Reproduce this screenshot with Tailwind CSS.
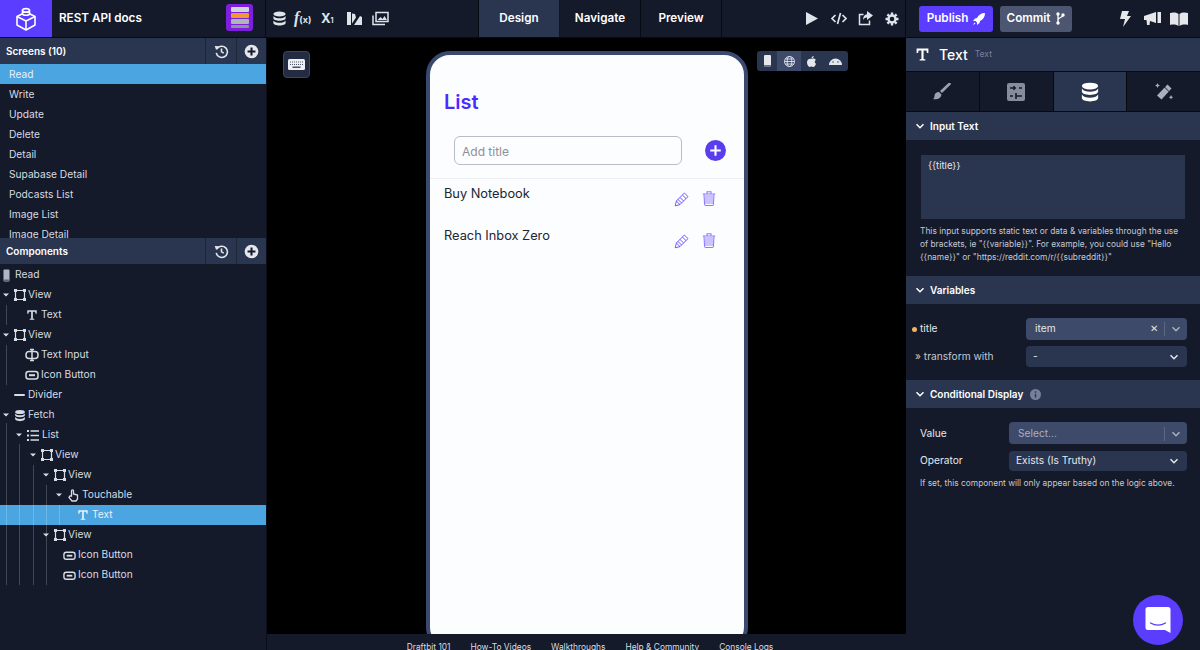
<!DOCTYPE html>
<html lang="en">
<head>
<meta charset="UTF-8" />
<meta name="viewport" content="width=device-width, initial-scale=1.0" />
<title>REST API docs</title>
<script src="https://cdn.jsdelivr.net/npm/@tailwindcss/browser@4"></script>
</head>
<body class="w-[1200px] h-[650px] overflow-hidden relative bg-[#141a2a] text-[#e5e7eb] font-['Inter','Liberation_Sans',sans-serif] text-[10.2px]">

<!-- shared icons -->
<svg class="hidden">
  <symbol id="db" viewBox="0 0 16 16"><ellipse cx="8" cy="3.2" rx="6.5" ry="2.7" fill="currentColor"/><path fill="currentColor" d="M1.5 5.2c1 1.8 3.6 2.5 6.5 2.5s5.500-.7 6.500-2.500v2.400c0 1.500-2.900 2.700-6.500 2.700s-6.500-1.200-6.500-2.700zM1.500 10c1 1.800 3.600 2.500 6.500 2.500s5.500-.7 6.500-2.500v2.800c0 1.500-2.900 2.700-6.500 2.700s-6.500-1.200-6.500-2.700z"/></symbol>
  <symbol id="history" viewBox="0 0 16 16"><path fill="none" stroke="currentColor" stroke-width="1.700" d="M3 5.500a6 6 0 1 1-.6 4M8 4.700v3.600l2.400 1.400"/><path fill="currentColor" d="M.8 2.200l4.800.3-3.400 4z"/></symbol>
  <symbol id="plus" viewBox="0 0 16 16"><circle cx="8" cy="8" r="7.300" fill="currentColor"/><path stroke="#141a2a" stroke-width="2.200" d="M8 3.800v8.400M3.800 8h8.400"/></symbol>
  <symbol id="view" viewBox="0 0 14 14"><path fill="none" stroke="currentColor" stroke-width="1.200" d="M2.500 2.500h9v9h-9z"/><path fill="currentColor" d="M1 1h3v3H1zM10 1h3v3h-3zM1 10h3v3H1zM10 10h3v3h-3z"/></symbol>
  <symbol id="t" viewBox="0 0 14 14"><path fill="currentColor" d="M1.500 1.500h11v4h-1.300l-.6-2.300H8v7.900l1.700.5v1H4.300v-1l1.700-.5V3.200H3.400l-.6 2.300H1.500z"/></symbol>
  <symbol id="input" viewBox="0 0 14 14"><rect x="1" y="3.500" width="12" height="7" rx="3" fill="none" stroke="currentColor" stroke-width="1.500"/><path stroke="currentColor" stroke-width="1.500" d="M7 1.500v11M5 1.500h4M5 12.500h4"/></symbol>
  <symbol id="btn" viewBox="0 0 14 14"><rect x="1" y="3.500" width="12" height="7.500" rx="2.500" fill="none" stroke="currentColor" stroke-width="1.500"/><path stroke="currentColor" stroke-width="2" d="M4 7.200h6"/></symbol>
  <symbol id="caret" viewBox="0 0 6 6"><path fill="currentColor" d="M0 1.500h6L3 4.500z"/></symbol>
  <symbol id="chev" viewBox="0 0 10 10"><path fill="none" stroke="currentColor" stroke-width="1.500" d="M1.500 3.200L5 6.700l3.500-3.500"/></symbol>
  <symbol id="pencil" viewBox="0 0 16 16"><path fill="none" stroke="currentColor" stroke-width=".9" d="M1.200 14.800l1.200-4.800 8-8 3.600 3.600-8 8zM2.400 10l3.600 3.600M4 8.400L7.600 12M6 6.400L9.600 10M8.400 4L12 7.600"/></symbol>
  <symbol id="trash" viewBox="0 0 14 16"><path fill="currentColor" fill-opacity=".45" d="M3 4.500h8v9H3z"/><path fill="none" stroke="currentColor" stroke-width="1.100" d="M2 3.500h10l-.6 10.500a1.200 1.200 0 0 1-1.200 1H3.800a1.200 1.200 0 0 1-1.200-1zM.8 3.500h12.400M5 3.300V1.200h4v2.100"/></symbol>
</svg>

<!-- top bar -->
<header class="flex h-[38px] border-b border-black/60 bg-[#151a2b]">
  <div class="w-[52px] bg-[#5a3dff] flex items-center justify-center">
    <svg class="w-[24px] h-[24px] text-white" viewBox="0 0 24 24" fill="none" stroke="currentColor" stroke-width="1.600" stroke-linejoin="round"><path d="M12 5l9 4.500v8.500l-9 5-9-5V9.500z"/><path d="M3 9.500l9 4.500 9-4.500M12 14v9"/><path d="M8.500 3.500c0 1 1.500 1.800 3.500 1.800s3.500-.8 3.500-1.800v3c0 1-1.500 1.800-3.500 1.800s-3.500-.8-3.500-1.800z" fill="#5a3dff"/><ellipse cx="12" cy="3.300" rx="3.500" ry="1.700" fill="#5a3dff"/></svg>
  </div>
  <div class="w-[174px] pl-[7px] flex items-center text-[11.700px] font-semibold text-white">REST API docs</div>
  <div class="w-[27px] h-[27px] mt-[4px] rounded-[3px] bg-[#7d1fdc] flex flex-col items-center justify-center gap-[1px]">
    <span class="block w-[18px] h-[5px] bg-[#cfd4da] rounded-[1px]"></span>
    <span class="block w-[18px] h-[5px] bg-[#ef9a2f] rounded-[1px]"></span>
    <span class="block w-[18px] h-[5px] bg-[#aeb5bd] rounded-[1px]"></span>
    <span class="block w-[18px] h-[3px] bg-[#8b94a0] rounded-[1px]"></span>
  </div>
  <div class="w-[13px] border-r border-black/60"></div>
  <div class="flex items-center w-[213px] pl-[6px] border-r border-black/60 text-[#dfe3ea]">
    <svg class="w-[15px] h-[15px]"><use href="#db"/></svg>
    <span class="ml-[7px] w-[20px] text-[16px] leading-[16px] font-bold font-['Liberation_Serif',serif] whitespace-nowrap"><i>f</i><span class="text-[9px] font-['Inter',sans-serif]">(x)</span></span>
    <span class="ml-[7px] w-[17px] text-[13px] font-bold">X<span class="text-[7px]">1</span></span>
    <svg class="ml-[8px] w-[16px] h-[15px]" viewBox="0 0 16 15"><path fill="currentColor" d="M1 1h4v13H1zM6 2.500l3 .5 1 3.500-4 6zM8 14l6-9 2 1v8z"/></svg>
    <svg class="ml-[10px] w-[17px] h-[15px]" viewBox="0 0 17 15"><path fill="none" stroke="currentColor" stroke-width="1.500" d="M4 1.500h12v9H4zM1 4.500v9h12"/><path fill="currentColor" d="M5.500 9l3-3 2 2 2-3 2.500 4z"/></svg>
  </div>
  <div class="w-[81px] bg-[#2a3550] flex items-center justify-center text-[11.700px] font-semibold text-white border-r border-black/60">Design</div>
  <div class="w-[81px] flex items-center justify-center text-[11.700px] font-semibold text-white border-r border-black/60">Navigate</div>
  <div class="w-[81px] flex items-center justify-center text-[11.700px] font-semibold text-white border-r border-black/60">Preview</div>
  <div class="w-[184px] flex items-center pl-[83px] gap-[12px] border-r border-black/60 text-[#dfe3ea]">
    <svg class="w-[14px] h-[15px]" viewBox="0 0 14 15"><path fill="currentColor" d="M1 1l12 6.500L1 14z"/></svg>
    <svg class="w-[16px] h-[13px]" viewBox="0 0 16 13"><path fill="none" stroke="currentColor" stroke-width="1.700" d="M4.500 3L1 6.500 4.500 10M11.500 3L15 6.500 11.500 10M9.500 1l-3 11"/></svg>
    <svg class="w-[15px] h-[15px] ml-[-1px]" viewBox="0 0 15 15"><path fill="none" stroke="currentColor" stroke-width="1.500" d="M11.500 9.500v4h-10V3.500h4"/><path fill="currentColor" d="M9 0l6 4.500L9 9V6.500c-2 0-3.500.8-4 3 0-4 1.500-6 4-6.200z"/></svg>
    <svg class="w-[14px] h-[14px]" viewBox="0 0 14 14"><circle cx="7" cy="7" r="3.500" fill="none" stroke="currentColor" stroke-width="2.400"/><path stroke="currentColor" stroke-width="2.400" d="M7 .5v2.500M7 11v2.500M.5 7H3M11 7h2.500M2.400 2.400l1.800 1.800M9.800 9.800l1.800 1.800M2.400 11.600l1.800-1.800M9.800 4.200l1.800-1.800"/></svg>
  </div>
  <div class="flex-1 flex items-center pl-[13px]">
    <div class="w-[74px] h-[26px] rounded-[3px] bg-[#5a3dff] flex items-center justify-center gap-[5px] text-[11.700px] font-semibold text-white">Publish
      <svg class="w-[12px] h-[12px]" viewBox="0 0 12 12"><path fill="currentColor" d="M12 0c-4 0-6.500 2-8 5L2 5.500 0 8h2.500L4 9.500V12l2.500-2L7 8c3-1.500 5-4 5-8zM1.500 9.500L0 12l2.500-1.500z"/></svg>
    </div>
    <div class="ml-[7px] w-[72px] h-[26px] rounded-[3px] bg-[#4d5670] flex items-center justify-center gap-[6px] text-[11.700px] font-semibold text-white">Commit
      <svg class="w-[9px] h-[13px]" viewBox="0 0 9 13"><circle cx="2" cy="2" r="1.700" fill="currentColor"/><circle cx="2" cy="11" r="1.700" fill="currentColor"/><circle cx="7" cy="3" r="1.700" fill="currentColor"/><path fill="none" stroke="currentColor" stroke-width="1.300" d="M2 2v9M7 3c0 3-5 2-5 5"/></svg>
    </div>
    <svg class="ml-[48px] w-[11px] h-[16px]" viewBox="0 0 11 16"><path fill="#e5e7eb" d="M2 0h7L7 5h4L3 16l2-8H0z"/></svg>
    <svg class="ml-[13px] w-[17px] h-[14px]" viewBox="0 0 17 14"><path fill="#e5e7eb" d="M0 4l12-4v11L6 9l-.5 4H3l-.5-5H0zM13.500 0H17v11h-3.500z"/></svg>
    <svg class="ml-[9px] w-[18px] h-[14px]" viewBox="0 0 18 14"><path fill="#e5e7eb" d="M0 1c3-.8 6-.8 8.500 1v12C6 12.500 3 12.200 0 13zM18 1c-3-.8-6-.8-8.500 1v12c2.500-1.500 5.500-1.800 8.500-1z"/></svg>
  </div>
</header>

<div class="flex h-[612px]">
  <!-- left column -->
  <aside class="w-[267px] shrink-0 flex flex-col border-r border-black/40 overflow-hidden">
    <div class="h-[26px] shrink-0 bg-[#2a3550] flex items-center">
      <span class="flex-1 pl-[6px] text-[10px] font-semibold text-white">Screens (10)</span>
      <span class="w-[31px] h-full border-l border-black/30 flex items-center justify-center"><svg class="w-[15px] h-[15px]"><use href="#history"/></svg></span>
      <span class="w-[30px] h-full border-l border-black/30 flex items-center justify-center"><svg class="w-[15px] h-[15px]"><use href="#plus"/></svg></span>
    </div>
    <ul class="h-[174px] shrink-0 overflow-hidden text-[#d8dce4]">
      <li class="h-[20px] pl-[9px] pt-px flex items-center bg-[#4ba5e0] text-[#e6f2fb]">Read</li>
      <li class="h-[20px] pl-[9px] pt-px flex items-center">Write</li>
      <li class="h-[20px] pl-[9px] pt-px flex items-center">Update</li>
      <li class="h-[20px] pl-[9px] pt-px flex items-center">Delete</li>
      <li class="h-[20px] pl-[9px] pt-px flex items-center">Detail</li>
      <li class="h-[20px] pl-[9px] pt-px flex items-center">Supabase Detail</li>
      <li class="h-[20px] pl-[9px] pt-px flex items-center">Podcasts List</li>
      <li class="h-[20px] pl-[9px] pt-px flex items-center">Image List</li>
      <li class="h-[20px] pl-[9px] pt-px flex items-center">Image Detail</li>
    </ul>
    <div class="h-[26px] shrink-0 bg-[#2a3550] flex items-center">
      <span class="flex-1 pl-[6px] text-[10px] font-semibold text-white">Components</span>
      <span class="w-[31px] h-full border-l border-black/30 flex items-center justify-center"><svg class="w-[15px] h-[15px]"><use href="#history"/></svg></span>
      <span class="w-[30px] h-full border-l border-black/30 flex items-center justify-center"><svg class="w-[15px] h-[15px]"><use href="#plus"/></svg></span>
    </div>
    <!-- component tree -->
    <div class="relative pt-px text-[#d8dce4]">
      <div class="h-[20px] flex items-center pl-[3px]">
        <svg class="w-[7px] h-[13px]" viewBox="0 0 7 13"><rect x=".5" y=".5" width="6" height="12" rx="1" fill="#aeb6c6"/><rect x="1" y="10.500" width="5" height="1.500" fill="#5b6477"/></svg>
        <span class="ml-[5px]">Read</span>
      </div>
      <div class="h-[20px] flex items-center pl-[3px]"><svg class="w-[6px] h-[6px]"><use href="#caret"/></svg><svg class="ml-[4px] w-[14px] h-[14px]"><use href="#view"/></svg><span class="ml-[1px]">View</span></div>
      <div class="h-[20px] flex items-center pl-[26px]"><svg class="w-[12px] h-[12px]"><use href="#t"/></svg><span class="ml-[3px]">Text</span></div>
      <div class="h-[20px] flex items-center pl-[3px]"><svg class="w-[6px] h-[6px]"><use href="#caret"/></svg><svg class="ml-[4px] w-[14px] h-[14px]"><use href="#view"/></svg><span class="ml-[1px]">View</span></div>
      <div class="h-[20px] flex items-center pl-[25px]"><svg class="w-[14px] h-[14px]"><use href="#input"/></svg><span class="ml-[2px]">Text Input</span></div>
      <div class="h-[20px] flex items-center pl-[25px]"><svg class="w-[14px] h-[14px]"><use href="#btn"/></svg><span class="ml-[2px]">Icon Button</span></div>
      <div class="h-[20px] flex items-center pl-[14px]"><span class="block w-[11px] h-[2px] bg-current rounded-full"></span><span class="ml-[3px]">Divider</span></div>
      <div class="h-[20px] flex items-center pl-[3px]"><svg class="w-[6px] h-[6px]"><use href="#caret"/></svg><svg class="ml-[5px] w-[12px] h-[13px]"><use href="#db"/></svg><span class="ml-[2px]">Fetch</span></div>
      <div class="h-[20px] flex items-center pl-[16px]"><svg class="w-[6px] h-[6px]"><use href="#caret"/></svg><svg class="ml-[5px] w-[12px] h-[11px]" viewBox="0 0 12 11"><path fill="currentColor" d="M0 0h2v2H0zM0 4.500h2v2H0zM0 9h2v2H0z"/><path stroke="currentColor" stroke-width="1.500" d="M3.500 1H12M3.500 5.500H12M3.500 10H12"/></svg><span class="ml-[3px]">List</span></div>
      <div class="h-[20px] flex items-center pl-[30px]"><svg class="w-[6px] h-[6px]"><use href="#caret"/></svg><svg class="ml-[4px] w-[14px] h-[14px]"><use href="#view"/></svg><span class="ml-[1px]">View</span></div>
      <div class="h-[20px] flex items-center pl-[43px]"><svg class="w-[6px] h-[6px]"><use href="#caret"/></svg><svg class="ml-[4px] w-[14px] h-[14px]"><use href="#view"/></svg><span class="ml-[1px]">View</span></div>
      <div class="h-[20px] flex items-center pl-[56px]"><svg class="w-[6px] h-[6px]"><use href="#caret"/></svg><svg class="ml-[6px] w-[11px] h-[13px]" viewBox="0 0 11 13"><path fill="none" stroke="currentColor" stroke-width="1.300" d="M3.500 7V1.800a1 1 0 0 1 2 0V5l4 1v4l-1.500 2H4L1 8.500 2 7z"/></svg><span class="ml-[3px]">Touchable</span></div>
      <div class="h-[20px] flex items-center pl-[77px] bg-[#4ba5e0] text-[#e6f2fb]"><svg class="w-[12px] h-[12px]"><use href="#t"/></svg><span class="ml-[3px]">Text</span></div>
      <div class="h-[20px] flex items-center pl-[43px]"><svg class="w-[6px] h-[6px]"><use href="#caret"/></svg><svg class="ml-[4px] w-[14px] h-[14px]"><use href="#view"/></svg><span class="ml-[1px]">View</span></div>
      <div class="h-[20px] flex items-center pl-[63px]"><svg class="w-[13px] h-[13px]"><use href="#btn"/></svg><span class="ml-[2px]">Icon Button</span></div>
      <div class="h-[20px] flex items-center pl-[63px]"><svg class="w-[13px] h-[13px]"><use href="#btn"/></svg><span class="ml-[2px]">Icon Button</span></div>
      <!-- guide lines over the tree -->
      <span class="absolute left-[6px] top-[41px] h-[20px] w-px bg-white/20"></span>
      <span class="absolute left-[6px] top-[81px] h-[40px] w-px bg-white/20"></span>
      <span class="absolute left-[6px] top-[159px] h-[162px] w-px bg-white/20"></span>
      <span class="absolute left-[19px] top-[180px] h-[141px] w-px bg-white/20"></span>
      <span class="absolute left-[33px] top-[201px] h-[120px] w-px bg-white/20"></span>
      <span class="absolute left-[46px] top-[221px] h-[100px] w-px bg-white/20"></span>
      <span class="absolute left-[59px] top-[241px] h-[20px] w-px bg-white/20"></span>
    </div>
  </aside>

  <!-- canvas -->
  <main class="w-[639px] shrink-0 flex flex-col bg-black">
    <div class="relative flex-1 overflow-hidden pt-[13px] pl-[159px]">
      <div class="w-[322px] h-[600px] border-4 border-[#3a4a6e] rounded-[24px] bg-[#fcfdff] overflow-hidden">
        <div class="pt-[35px] pl-[14px] h-[58px] text-[20px] leading-[24px] font-semibold text-[#4a2bff]">List</div>
        <div class="mt-[23px] flex items-center">
          <div class="ml-[24px] w-[228px] h-[29px] rounded-[6px] border border-[#b8bcc6] pl-[7px] pt-[2px] flex items-center text-[12px] text-[#8b8f98]">Add title</div>
          <svg class="ml-[23px] w-[21px] h-[21px]" viewBox="0 0 20 20"><circle cx="10" cy="10" r="10" fill="#5a3dee"/><path stroke="#fff" stroke-width="2" d="M10 5v10M5 10h10"/></svg>
        </div>
        <div class="mt-[13px] h-px bg-[#eceef2]"></div>
        <div class="h-[42px] flex pl-[14px] text-[#22252e]">
          <span class="pt-[5px] flex-1 text-[12.800px] leading-[20px]">Buy Notebook</span>
          <svg class="mt-[12px] w-[16px] h-[16px] text-[#5f4bff]"><use href="#pencil"/></svg>
          <svg class="mt-[11px] ml-[12px] mr-[28px] w-[14px] h-[17px] text-[#8b7dff]"><use href="#trash"/></svg>
        </div>
        <div class="h-[42px] flex pl-[14px] text-[#22252e]">
          <span class="pt-[5px] flex-1 text-[12.800px] leading-[20px]">Reach Inbox Zero</span>
          <svg class="mt-[12px] w-[16px] h-[16px] text-[#5f4bff]"><use href="#pencil"/></svg>
          <svg class="mt-[11px] ml-[12px] mr-[28px] w-[14px] h-[17px] text-[#8b7dff]"><use href="#trash"/></svg>
        </div>
      </div>
      <!-- floating controls over the canvas -->
      <div class="absolute left-[16px] top-[13px] w-[27px] h-[27px] rounded-[4px] border border-[#3a4560] bg-[#232c42] flex items-center justify-center">
        <svg class="w-[17px] h-[11px]" viewBox="0 0 17 11"><rect width="17" height="11" rx="1.500" fill="#eef0f4"/><path stroke="#232c42" stroke-width=".8" stroke-dasharray="1 1" d="M2 3h13M2 5.500h13"/><path stroke="#232c42" stroke-width="1.200" d="M4.500 8.200h8"/></svg>
      </div>
      <div class="absolute left-[490px] top-[13px] h-[20px] w-[91px] rounded-[3px] bg-[#2a3550] flex text-[#e5e7eb]">
        <span class="w-[20px] flex items-center justify-center"><svg class="w-[7px] h-[12px]" viewBox="0 0 7 12"><rect width="7" height="12" rx="1" fill="currentColor"/><rect y="10" width="7" height="2" fill="#6b7488"/></svg></span>
        <span class="w-[24px] bg-[#3e4a69] flex items-center justify-center"><svg class="w-[11px] h-[11px]" viewBox="0 0 11 11" fill="none" stroke="currentColor" stroke-width=".9"><circle cx="5.500" cy="5.500" r="5"/><ellipse cx="5.500" cy="5.500" rx="2.300" ry="5"/><path d="M.5 5.500h10M1.200 3h8.600M1.200 8h8.600"/></svg></span>
        <span class="w-[21px] flex items-center justify-center"><svg class="w-[9px] h-[11px]" viewBox="0 0 9 11"><path fill="currentColor" d="M4.500 2.800C5.500 2.300 8 2 8.800 4 7.300 5 7.500 7 9 7.700 8.500 9.500 7.300 11 6.300 11c-.7 0-1-.4-1.800-.4s-1 .4-1.800.4C1.500 11 0 8.500 0 6.300 0 4 1.800 2.300 4.500 2.800zM4.500 2.300C4.500 1 5.500 0 6.700 0c0 1.300-1 2.300-2.200 2.300z"/></svg></span>
        <span class="w-[26px] flex items-center justify-center"><svg class="w-[13px] h-[8px]" viewBox="0 0 13 8"><path fill="currentColor" d="M0 8a6.500 6.500 0 0 1 13 0z"/><circle cx="4" cy="5" r=".7" fill="#2a3550"/><circle cx="9" cy="5" r=".7" fill="#2a3550"/></svg></span>
      </div>
    </div>
    <footer class="h-[16px] shrink-0 overflow-hidden bg-[#141a2a] flex justify-center gap-[20px] pl-[7px] pt-[7px] text-[8.400px] leading-[12px] text-[#d8dce4]">
      <span>Draftbit 101</span><span>How-To Videos</span><span>Walkthroughs</span><span>Help &amp; Community</span><span>Console Logs</span>
    </footer>
  </main>

  <!-- right column -->
  <aside class="flex-1 flex flex-col">
    <div class="h-[33px] bg-[#2a3550] flex items-center pl-[9px]">
      <svg class="w-[15px] h-[15px] text-white"><use href="#t"/></svg>
      <span class="ml-[9px] text-[14px] font-medium text-white">Text</span>
      <span class="ml-[7px] text-[8.500px] text-[#77809a]">Text</span>
    </div>
    <div class="h-[41px] flex border-y border-black/60">
      <span class="flex-1 border-r border-black/60 flex items-center justify-center"><svg class="w-[20px] h-[20px] text-[#9aa1b1]" viewBox="0 0 20 20"><path fill="currentColor" d="M18.500 1c.5.300.5 1 .2 1.500L10 11 8 9l8.500-8zM7 10l2.500 2.500C9 16 6 18 1 17c2-1 1-3 2-5 1-1.500 2.500-2 4-2z"/></svg></span>
      <span class="flex-1 border-r border-black/60 flex items-center justify-center"><svg class="w-[18px] h-[18px]" viewBox="0 0 18 18"><rect width="18" height="18" rx="2" fill="#858c9c"/><path stroke="#151a2b" stroke-width="1.600" d="M3 5h6M7 3v4M3 13h3M9 13h6M9 10v6M15 5h-3"/></svg></span>
      <span class="flex-1 bg-[#2a3550] flex items-center justify-center"><svg class="w-[20px] h-[20px] text-white"><use href="#db"/></svg></span>
      <span class="flex-1 border-l border-black/60 flex items-center justify-center"><svg class="w-[20px] h-[20px] text-[#aab0be]" viewBox="0 0 20 20"><path fill="currentColor" d="M13.500 2.500l4 4L7.500 17.500l-4.500-4z"/><path stroke="#151a2b" d="M10.500 5l4.500 4.500"/><path fill="currentColor" d="M3.500 1l.8 1.700L6 3.500l-1.700.8L3.500 6l-.8-1.700L1 3.500l1.700-.8zM17 13l.7 1.500 1.500.7-1.500.7-.7 1.600-.7-1.600-1.500-.7 1.500-.7z"/></svg></span>
    </div>
    <div class="h-[28px] bg-[#2a3550] flex items-center pl-[9px] text-[10px] font-semibold text-white"><svg class="w-[10px] h-[10px]"><use href="#chev"/></svg><span class="ml-[5px]">Input Text</span></div>
    <div class="h-[136px] px-[14px] pt-[15px]">
      <div class="h-[64px] mx-px bg-[#2a3550] px-[7px] pt-[4px] text-[9.500px] text-[#e5e7eb]">{{title}}</div>
      <p class="mt-[6px] text-[8.400px] leading-[13px] text-[#c4c9d4]">This input supports static text or data &amp; variables through the use of brackets, ie "{{variable}}". For example, you could use "Hello {{name}}" or "https://reddit.com/r/{{subreddit}}"</p>
    </div>
    <div class="h-[28px] bg-[#2a3550] flex items-center pl-[9px] text-[10px] font-semibold text-white"><svg class="w-[10px] h-[10px]"><use href="#chev"/></svg><span class="ml-[5px]">Variables</span></div>
    <div class="h-[76px] pl-[6px] pt-[14px]">
      <div class="h-[22px] flex items-center">
        <span class="w-[5px] h-[5px] rounded-full bg-[#f2b35a]"></span>
        <span class="ml-[3px] w-[106px]">title</span>
        <div class="w-[161px] h-full rounded-[4px] bg-[#3e4a69] pl-[9px] flex items-center text-[#e5e7eb]">item<span class="ml-auto text-[#dfe3ea]">✕</span><span class="ml-[6px] h-[14px] w-px bg-[#5d6781]"></span><svg class="mx-[6px] w-[10px] h-[10px] text-[#aab0be]"><use href="#chev"/></svg></div>
      </div>
      <div class="mt-[6px] h-[21px] flex items-center">
        <span class="w-[114px] pl-[3px] text-[#c4c9d4]">» transform with</span>
        <div class="w-[161px] h-full rounded-[4px] bg-[#2a3550] pl-[7px] flex items-center">-<svg class="ml-auto mr-[8px] w-[10px] h-[10px]"><use href="#chev"/></svg></div>
      </div>
    </div>
    <div class="h-[28px] bg-[#2a3550] flex items-center pl-[9px] text-[10px] font-semibold text-white"><svg class="w-[10px] h-[10px]"><use href="#chev"/></svg><span class="ml-[5px]">Conditional Display</span>
      <svg class="ml-[7px] w-[11px] h-[11px]" viewBox="0 0 11 11"><circle cx="5.500" cy="5.500" r="5.500" fill="#77809a"/><path stroke="#2a3550" stroke-width="1.400" d="M5.500 4.800v3.700M5.500 2.300v1.400"/></svg>
    </div>
    <div class="pl-[14px] pt-[14px]">
      <div class="h-[22px] flex items-center">
        <span class="w-[89px] pt-px">Value</span>
        <div class="w-[178px] h-full rounded-[4px] bg-[#3e4a69] pl-[9px] pt-px flex items-center text-[#aab0c2]">Select...<span class="ml-auto h-[14px] w-px bg-[#5d6781]"></span><svg class="mx-[6px] w-[10px] h-[10px] text-[#aab0be]"><use href="#chev"/></svg></div>
      </div>
      <div class="mt-[7px] h-[20px] flex items-center">
        <span class="w-[89px]">Operator</span>
        <div class="w-[178px] h-full rounded-[4px] bg-[#2a3550] pl-[7px] flex items-center">Exists (Is Truthy)<svg class="ml-auto mr-[8px] w-[10px] h-[10px]"><use href="#chev"/></svg></div>
      </div>
      <p class="mt-[6px] text-[8.400px] leading-[13px] text-[#c4c9d4]">If set, this component will only appear based on the logic above.</p>
    </div>
  </aside>
</div>

<!-- chat launcher -->
<div class="absolute left-[1133px] top-[595px] w-[50px] h-[50px] rounded-full bg-[#5a3dff] flex items-center justify-center">
  <svg class="w-[26px] h-[28px]" viewBox="0 0 26 28"><path fill="#fff" d="M3 1h20a2.500 2.500 0 0 1 2.500 2.500V27l-5.500-3H3a2.500 2.500 0 0 1-2.500-2.500v-18A2.500 2.500 0 0 1 3 1z"/><path fill="none" stroke="#5a3dff" stroke-width="1.400" stroke-linecap="round" d="M5.500 17c4.500 2.500 10.500 2.500 15 0"/></svg>
</div>
</body>
</html>
